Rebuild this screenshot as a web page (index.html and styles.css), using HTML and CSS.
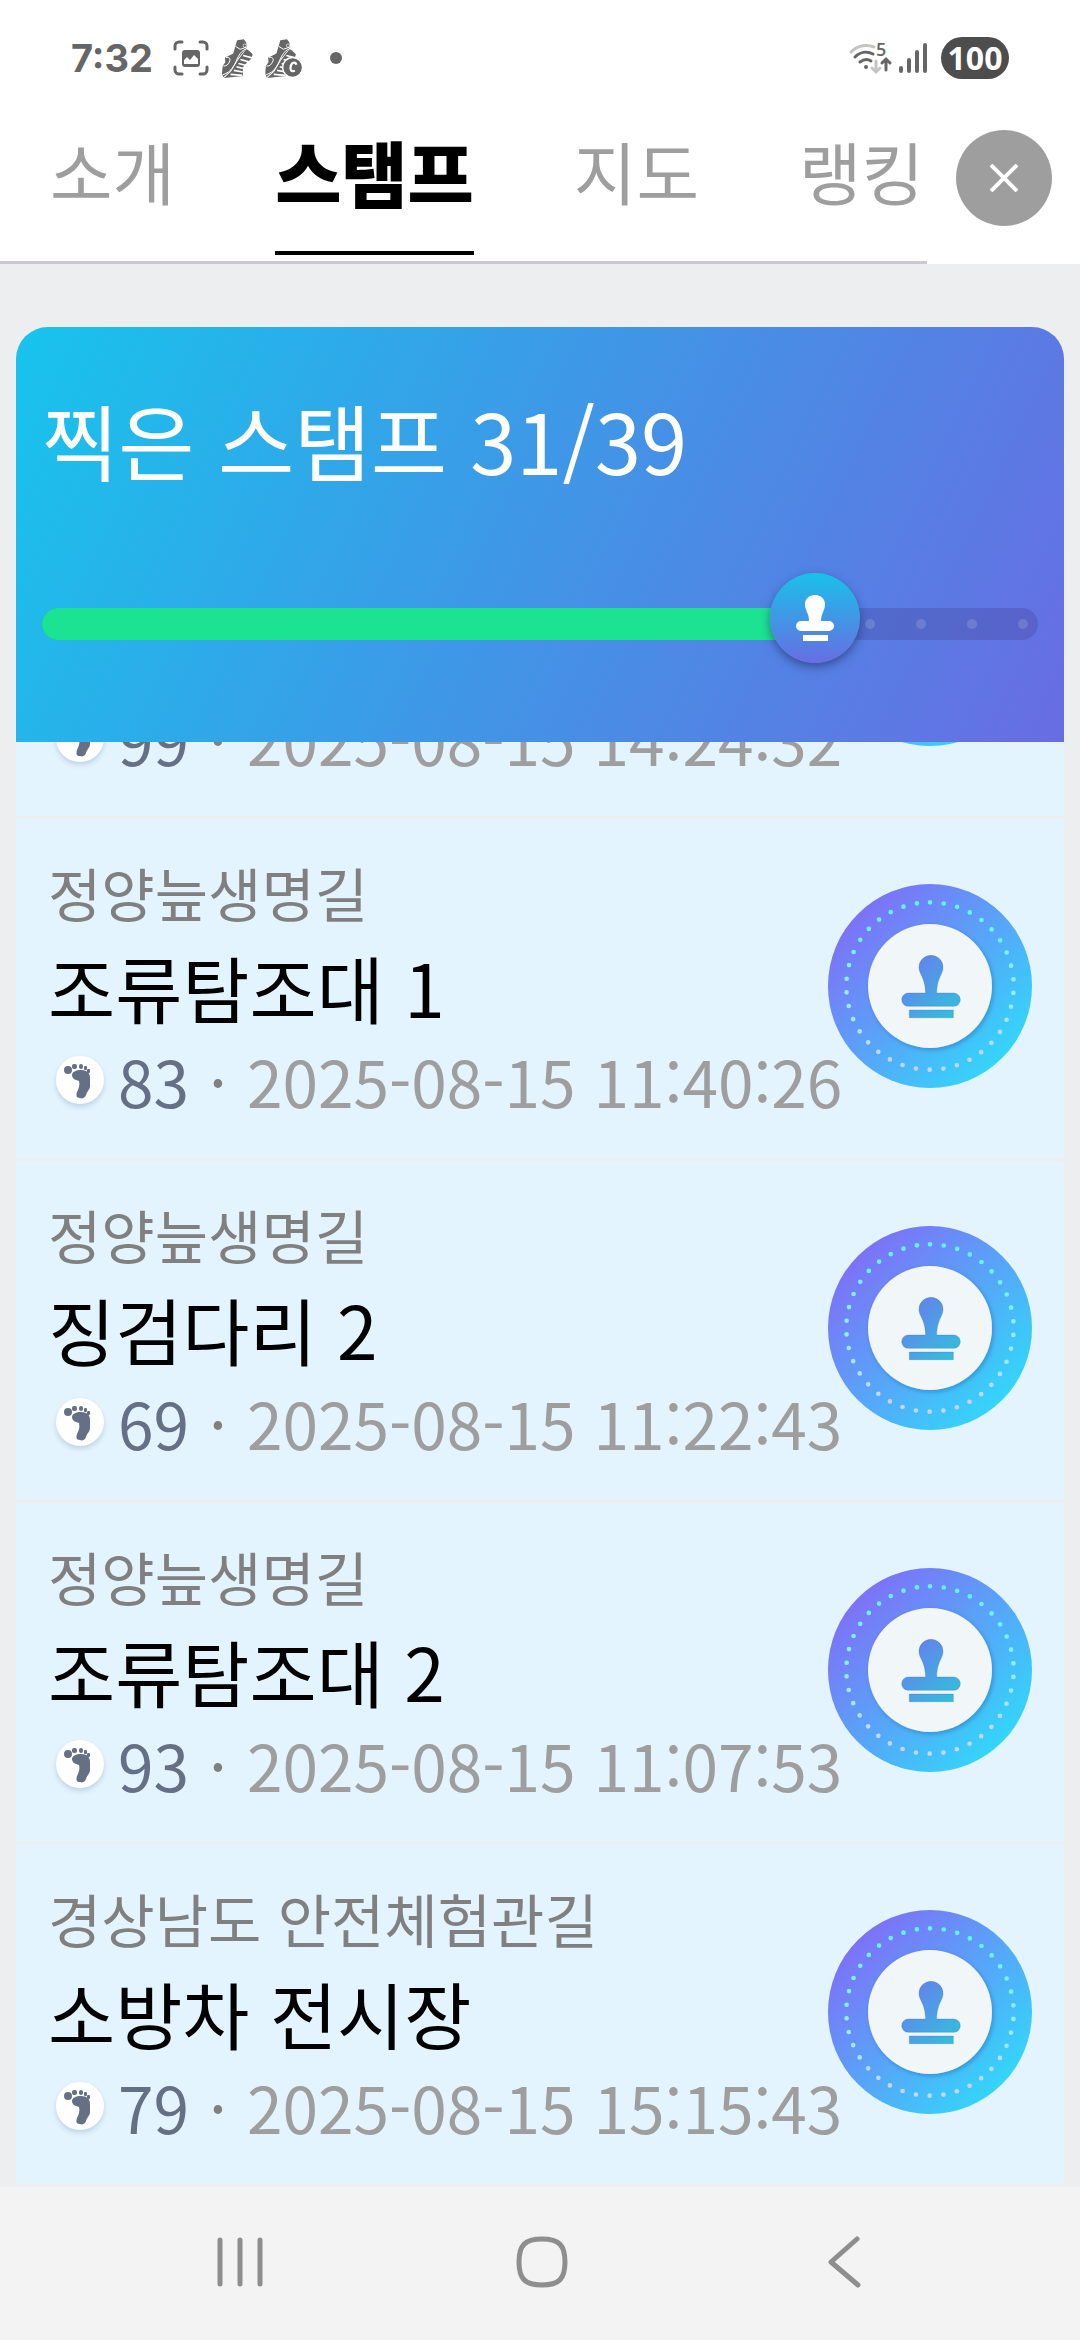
FILE: index.html
```html
<!DOCTYPE html>
<html lang="ko">
<head>
  <meta charset="UTF-8" />
  <meta name="viewport" content="width=device-width, initial-scale=1.0"/>
  <title>스탬프</title>
  <link rel="stylesheet" href="styles.css">
</head>
<body>
  <!-- Shared icons -->
  <svg class="icon-defs" width="0" height="0" aria-hidden="true">
    <defs>
      <linearGradient id="ringFill" gradientUnits="userSpaceOnUse" x1="90" y1="90" x2="522" y2="522">
        <stop offset="0" stop-color="#7d72f7"/>
        <stop offset="1" stop-color="#34d5f9"/>
      </linearGradient>
      <linearGradient id="dotFill" gradientUnits="userSpaceOnUse" x1="522" y1="306" x2="90" y2="306">
        <stop offset="0" stop-color="#5ff5ff"/>
        <stop offset="0.5" stop-color="#8ef0ff"/>
        <stop offset="1" stop-color="#c3d6ff"/>
      </linearGradient>
      <linearGradient id="stampFill" gradientUnits="userSpaceOnUse" x1="240" y1="240" x2="390" y2="390">
        <stop offset="0" stop-color="#6581ec"/>
        <stop offset="1" stop-color="#31c0dd"/>
      </linearGradient>
      <filter id="discShadow" x="-20%" y="-20%" width="140%" height="140%">
        <feDropShadow dx="5" dy="6" stdDeviation="6" flood-color="#1b4f9c" flood-opacity="0.4"/>
      </filter>
    </defs>

    <symbol id="stamp" viewBox="0 0 612 612">
      <circle cx="306" cy="306" r="306" fill="url(#ringFill)"/>
      <circle cx="306" cy="306" r="251" fill="none" stroke="url(#dotFill)" stroke-width="14" stroke-linecap="round" pathLength="38" stroke-dasharray="0 1" transform="rotate(-90 306 306)"/>
      <circle cx="306" cy="306" r="186" fill="#f1f6f8" filter="url(#discShadow)"/>
      <g fill="url(#stampFill)" stroke="#2c5fb8" stroke-opacity="0.25" stroke-width="3">
        <path d="M309 214a36 36 0 0 1 36 36c0 22-17 28-19 77h51a20 20 0 0 1 0 40H241a20 20 0 0 1 0-40h52c-2-49-20-55-20-77a36 36 0 0 1 36-36z"/>
        <path d="M244 378h132v23H244z"/>
      </g>
    </symbol>

    <symbol id="foot" viewBox="0 0 48 48">
      <circle cx="12" cy="14" r="4"/>
      <rect x="16" y="8" width="5" height="5" rx="2"/>
      <rect x="23" y="8" width="4" height="5" rx="2"/>
      <rect x="28" y="10" width="3" height="4" rx="1"/>
      <rect x="31" y="13" width="3" height="4" rx="1"/>
      <path d="M16 19c0-3 4-5 9-5 6 0 9 3 9 8v8c0 4-3 5-4 9-1 3-4 4-6 3-4 0-4-3-3-6 2-4 3-7 2-11-3-1-7-2-7-6z"/>
    </symbol>

    <symbol id="shoe" viewBox="0 0 94 118">
      <path fill="#666" d="M46 4l20-3 7 9 3 15-28 35-22 36-22 20-4-12 2-22 8-12-1-14 9-4 16-8z"/>
      <path fill="#666" d="M74 30l9 6 10 10-4 14-14 12-12 14 1 26-58 6 22-20 20-34z"/>
      <path fill="none" stroke="#fff" stroke-width="3" d="M77 28C50 36 46 66 34 84 26 98 14 104 3 108M41 22l14 9 21-7M12 56c10-2 16 4 10 14-4 8-8 12-18 12"/>
      <path fill="none" stroke="#fff" stroke-width="5" d="M64 50l27 7M56 62l28 8M50 74l24 6M44 84l19 5M36 95l27 5M26 107l36 3"/>
      <circle cx="69" cy="20" r="5" fill="none" stroke="#fff" stroke-width="2"/>
    </symbol>
  </svg>

  <header>
    <!-- Status bar -->
    <div class="status-bar">
      <span class="clock">7:32</span>
      <svg class="status-capture" viewBox="0 0 36 36" aria-hidden="true">
        <path fill="none" stroke="#666" stroke-width="3" stroke-linecap="round" d="M2 9V6a4 4 0 0 1 4-4h3M27 2h3a4 4 0 0 1 4 4v3M34 27v3a4 4 0 0 1-4 4h-3M9 34H6a4 4 0 0 1-4-4v-3"/>
        <rect x="9" y="10" width="18" height="17" rx="3" fill="#666"/>
        <path fill="#fff" d="M11 24v-4l3-3 3 3 4-5 4 4v5z"/>
      </svg>
      <svg class="status-shoe" viewBox="0 0 94 118" aria-hidden="true"><use href="#shoe"/></svg>
      <svg class="status-shoe-c" viewBox="0 0 114 118" aria-hidden="true">
        <use href="#shoe" width="94" height="118"/>
        <circle cx="83" cy="86" r="30" fill="#666" stroke="#fff" stroke-width="4"/>
        <path fill="none" stroke="#fff" stroke-width="7" d="M94 78c-2-10-12-8-16 2-4 12 0 20 12 16"/>
      </svg>
      <span class="more-dot"></span>

      <div class="status-right">
        <svg class="status-wifi" viewBox="0 0 42 36" aria-hidden="true">
          <g fill="none" stroke-width="3" stroke-linecap="round">
            <path stroke="#c4c4c4" d="M2 12C9 5 18 4 25 7"/>
            <path stroke="#666" d="M6 17c5-5 12-6 18-3M11 22c4-3 8-3 11-1"/>
            <path stroke="#c4c4c4" d="M27 21v10M23 28l4 4 4-4"/>
            <path stroke="#666" d="M37 30V20M33 23l4-4 4 4"/>
          </g>
          <circle cx="17" cy="27" r="2" fill="#666"/>
          <text class="wifi-band" x="27" y="16">5</text>
        </svg>
        <svg class="status-signal" viewBox="0 0 28 30" aria-hidden="true">
          <path fill="none" stroke="#666" stroke-width="4" stroke-linecap="round" d="M2 25v3M10 17v11M18 9v19M26 2v26"/>
        </svg>
        <span class="battery">100</span>
      </div>
    </div>

    <!-- Tabs -->
    <div class="top-bar">
      <nav class="tabs">
        <a href="#intro"><span>소개</span></a>
        <a href="#stamps" class="active" aria-current="page"><span>스탬프</span></a>
        <a href="#map"><span>지도</span></a>
        <a href="#ranking"><span>랭킹</span></a>
      </nav>
      <div class="close-wrap">
        <button class="close" type="button" aria-label="닫기">
          <svg viewBox="0 0 28 28" aria-hidden="true"><path fill="none" stroke="#fff" stroke-width="4" d="M1 1l26 26M27 1L1 27"/></svg>
        </button>
      </div>
    </div>
  </header>

  <main>
    <!-- Collected stamps -->
    <section class="summary">
      <h1>찍은 스탬프 31/39</h1>
      <div class="track" role="progressbar" aria-valuenow="31" aria-valuemin="0" aria-valuemax="39" aria-label="찍은 스탬프">
        <div class="fill" style="width: 78%">
          <span class="knob">
            <svg viewBox="0 0 38 48" aria-hidden="true">
              <path fill="#fff" d="M19 1c6 0 10 4 10 9 0 7-4 9-4 17h8a5 5 0 0 1 0 10H5a5 5 0 0 1 0-10h8c0-8-4-10-4-17 0-5 4-9 10-9zM7 41h25v6H7z"/>
            </svg>
          </span>
        </div>
        <div class="ticks"><i></i><i></i><i></i><i></i></div>
      </div>
    </section>

    <!-- Stamp list, scrolled under the summary -->
    <ul class="stamp-list" id="stamps">
      <li>
        <div class="info">
          <p class="course">정양늪생명길</p>
          <h2>징검다리 1</h2>
          <p class="meta"><svg class="foot" viewBox="0 0 48 48"><use href="#foot"/></svg><span class="steps">99</span> <span class="sep">·</span> <time>2025-08-15 14:24:32</time></p>
        </div>
        <svg class="stamp" viewBox="0 0 612 612"><use href="#stamp"/></svg>
      </li>
      <li>
        <div class="info">
          <p class="course">정양늪생명길</p>
          <h2>조류탐조대 1</h2>
          <p class="meta"><svg class="foot" viewBox="0 0 48 48"><use href="#foot"/></svg><span class="steps">83</span> <span class="sep">·</span> <time>2025-08-15 11:40:26</time></p>
        </div>
        <svg class="stamp" viewBox="0 0 612 612"><use href="#stamp"/></svg>
      </li>
      <li>
        <div class="info">
          <p class="course">정양늪생명길</p>
          <h2>징검다리 2</h2>
          <p class="meta"><svg class="foot" viewBox="0 0 48 48"><use href="#foot"/></svg><span class="steps">69</span> <span class="sep">·</span> <time>2025-08-15 11:22:43</time></p>
        </div>
        <svg class="stamp" viewBox="0 0 612 612"><use href="#stamp"/></svg>
      </li>
      <li>
        <div class="info">
          <p class="course">정양늪생명길</p>
          <h2>조류탐조대 2</h2>
          <p class="meta"><svg class="foot" viewBox="0 0 48 48"><use href="#foot"/></svg><span class="steps">93</span> <span class="sep">·</span> <time>2025-08-15 11:07:53</time></p>
        </div>
        <svg class="stamp" viewBox="0 0 612 612"><use href="#stamp"/></svg>
      </li>
      <li>
        <div class="info">
          <p class="course">경상남도 안전체험관길</p>
          <h2>소방차 전시장</h2>
          <p class="meta"><svg class="foot" viewBox="0 0 48 48"><use href="#foot"/></svg><span class="steps">79</span> <span class="sep">·</span> <time>2025-08-15 15:15:43</time></p>
        </div>
        <svg class="stamp" viewBox="0 0 612 612"><use href="#stamp"/></svg>
      </li>
    </ul>
  </main>

  <!-- System navigation -->
  <footer class="nav-bar">
    <button type="button" aria-label="최근 앱">
      <svg viewBox="0 0 52 52"><path d="M6 4v44M26 4v44M46 4v44"/></svg>
    </button>
    <button type="button" aria-label="홈">
      <svg viewBox="0 0 52 52"><path d="M26 3c17 0 23 6 23 23s-6 23-23 23S3 43 3 26 9 3 26 3z"/></svg>
    </button>
    <button type="button" aria-label="뒤로">
      <svg viewBox="0 0 52 52"><path d="M39 3L13 26l27 23"/></svg>
    </button>
  </footer>
</body>
</html>
```
FILE: styles.css
```css
* {
  margin: 0;
  padding: 0;
  box-sizing: border-box;
}

body {
  font-family: "Noto Sans CJK KR", sans-serif;
  display: flex;
  flex-direction: column;
  height: 100vh;
  background-color: #eceef0;
  color: #000;
  overflow: hidden;
}

svg {
  display: block;
  flex-shrink: 0;
}

.icon-defs {
  position: absolute;
}

header {
  background-color: #fff;
}

/* Status bar */
.status-bar {
  display: flex;
  align-items: center;
  height: 116px;
  padding: 0 71px;
}

.clock {
  font-family: Inter, sans-serif;
  font-size: 38px;
  font-weight: 700;
  color: #666;
  margin-right: 20px;
}

.status-capture {
  width: 36px;
  height: 36px;
  margin-right: 13px;
}

.status-shoe {
  width: 31px;
  height: 39px;
  margin-right: 12px;
}

.status-shoe-c {
  width: 38px;
  height: 39px;
}

.more-dot {
  width: 12px;
  height: 12px;
  margin-left: 27px;
  border-radius: 50%;
  background-color: #666;
}

.status-right {
  display: flex;
  align-items: center;
  margin-left: auto;
}

.status-wifi {
  width: 42px;
  height: 36px;
  margin-right: 8px;
  overflow: visible;
}

.wifi-band {
  font-family: "Open Sans", sans-serif;
  font-size: 18px;
  font-weight: 600;
  fill: #666;
}

.status-signal {
  width: 28px;
  height: 30px;
  margin-right: 14px;
}

.battery {
  width: 68px;
  height: 42px;
  border-radius: 21px;
  background-color: #4d4d4d;
  color: #fff;
  font-family: "Open Sans", sans-serif;
  font-size: 32px;
  font-weight: 700;
  line-height: 42px;
  text-align: center;
}

/* Tabs */
.top-bar {
  display: flex;
  height: 148px;
}

.tabs {
  flex: 1;
  display: flex;
  overflow: hidden;
  border-bottom: 3px solid #cbc8d0;
}

.tabs a {
  flex-shrink: 0;
  padding: 0 50px;
  color: #9e9e9e;
  font-size: 68px;
  font-weight: 400;
  line-height: 110px;
  text-decoration: none;
}

.tabs span {
  display: block;
  height: 139px;
}

.tabs .active {
  color: #000;
  font-size: 72px;
  font-weight: 900;
}

.tabs .active span {
  border-bottom: 4px solid #000;
}

.close-wrap {
  width: 153px;
  padding-top: 14px;
}

.close {
  display: flex;
  align-items: center;
  justify-content: center;
  width: 96px;
  height: 96px;
  margin: 0 auto;
  border: none;
  border-radius: 50%;
  background-color: #9e9e9e;
  cursor: pointer;
}

.close svg {
  width: 28px;
  height: 28px;
}

main {
  flex: 1;
  min-height: 0;
  display: flex;
  flex-direction: column;
  padding: 63px 16px 0;
}

/* Summary card */
.summary {
  padding: 52px 26px 102px;
  border-radius: 32px 32px 0 0;
  background: linear-gradient(115deg, #17c4ec, #3c9ae7 45%, #686de2);
}

.summary h1 {
  margin-bottom: 109px;
  color: #fff;
  font-size: 83px;
  font-weight: 400;
  line-height: 120px;
}

.track {
  display: flex;
  justify-content: space-between;
  height: 32px;
  border-radius: 16px;
  background-color: rgba(60, 50, 130, 0.25);
}

.fill {
  position: relative;
  border-radius: 16px 0 0 16px;
  background-color: #1be391;
}

.knob {
  position: absolute;
  top: -35px;
  right: -41px;
  display: flex;
  align-items: center;
  justify-content: center;
  width: 90px;
  height: 90px;
  border-radius: 50%;
  background: linear-gradient(#19c1ea, #686de2);
  box-shadow: 0 4px 10px rgba(30, 40, 90, 0.55);
}

.knob svg {
  width: 38px;
  height: 48px;
}

.ticks {
  display: flex;
  align-items: center;
  gap: 41px;
  padding-right: 10px;
}

.ticks i {
  width: 10px;
  height: 10px;
  border-radius: 50%;
  background-color: rgba(255, 255, 255, 0.14);
}

/* Stamp list */
.stamp-list {
  flex: 1;
  min-height: 0;
  display: flex;
  flex-direction: column;
  justify-content: flex-end;
  overflow: hidden;
  list-style: none;
}

.stamp-list li {
  flex-shrink: 0;
  display: flex;
  align-items: center;
  justify-content: space-between;
  padding: 26px 32px 31px;
  border-bottom: 3px solid #eceef0;
  background-color: #e3f4ff;
  white-space: nowrap;
}

.info {
  flex: 1;
  min-width: 0;
  line-height: 94px;
}

.course {
  color: #808080;
  font-size: 58px;
}

.info h2 {
  font-size: 73px;
  font-weight: 400;
  line-height: 94px;
}

.meta {
  display: flex;
  align-items: center;
  gap: 14px;
  height: 94px;
  color: #9e9e9e;
  font-size: 64px;
}

.foot {
  width: 48px;
  height: 48px;
  margin-left: 8px;
  border-radius: 50%;
  background-color: #fff;
  fill: #667085;
  box-shadow: 0 3px 5px rgba(60, 80, 120, 0.2);
}

.steps {
  color: #667085;
}

.sep {
  padding: 0 6px;
  color: #808080;
}

.stamp {
  width: 204px;
  height: 204px;
}

/* System navigation */
.nav-bar {
  display: flex;
  height: 153px;
  padding: 0 85px 4px 89px;
  background-color: #f3f3f3;
}

.nav-bar button {
  flex: 1;
  display: flex;
  align-items: center;
  justify-content: center;
  border: none;
  background: none;
  cursor: pointer;
}

.nav-bar svg {
  width: 52px;
  height: 52px;
  fill: none;
  stroke: #8e8e8e;
  stroke-width: 5;
  stroke-linecap: round;
  stroke-linejoin: round;
}
```
